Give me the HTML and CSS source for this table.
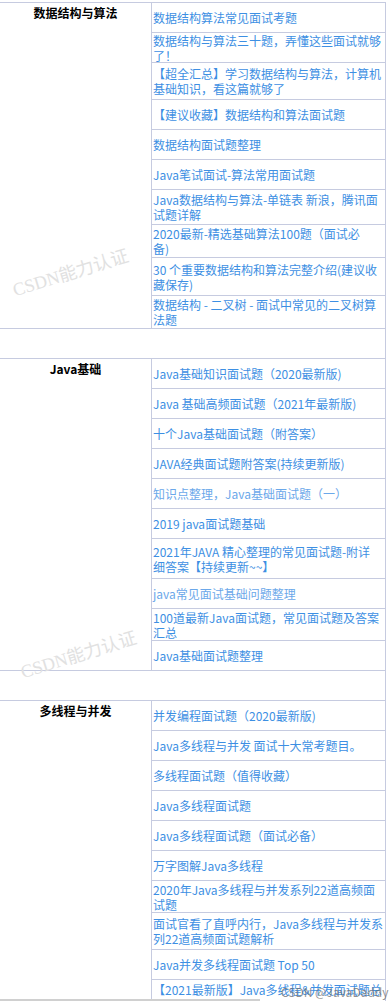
FILE: index.html
```html
<!DOCTYPE html>
<html lang="zh-CN">
<head>
<meta charset="utf-8">
<title>面试题汇总</title>
<link rel="stylesheet" href="styles.css">
</head>
<body>
<div class="sheet">
  <section class="group">
    <div class="label">数据结构与算法</div>
    <ul class="items">
      <li class="item"><a href="#">数据结构算法常见面试考题</a></li>
      <li class="item"><a href="#">数据结构与算法三十题，弄懂这些面试就够了！</a></li>
      <li class="item h36"><a href="#">【超全汇总】学习数据结构与算法，计算机基础知识，看这篇就够了</a></li>
      <li class="item"><a href="#">【建议收藏】数据结构和算法面试题</a></li>
      <li class="item"><a href="#">数据结构面试题整理</a></li>
      <li class="item"><a href="#">Java笔试面试-算法常用面试题</a></li>
      <li class="item h34"><a href="#">Java数据结构与算法-单链表 新浪，腾讯面试题详解</a></li>
      <li class="item h32"><a href="#">2020最新-精选基础算法100题（面试必<br>备)</a></li>
      <li class="item h37"><a href="#">30 个重要数据结构和算法完整介绍(建议收藏保存)</a></li>
      <li class="item h32"><a href="#">数据结构 - 二叉树 - 面试中常见的二叉树算法题</a></li>
    </ul>
  </section>
  <div class="gap"></div>
  <section class="group">
    <div class="label">Java基础</div>
    <ul class="items">
      <li class="item"><a href="#">Java基础知识面试题（2020最新版)</a></li>
      <li class="item"><a href="#">Java 基础高频面试题（2021年最新版)</a></li>
      <li class="item"><a href="#">十个Java基础面试题（附答案）</a></li>
      <li class="item"><a href="#">JAVA经典面试题附答案(持续更新版)</a></li>
      <li class="item"><a class="seen" href="#">知识点整理，Java基础面试题（一）</a></li>
      <li class="item"><a href="#">2019 java面试题基础</a></li>
      <li class="item h39"><a href="#">2021年JAVA 精心整理的常见面试题-附详<br>细答案【持续更新~~】</a></li>
      <li class="item"><a class="seen" href="#">java常见面试基础问题整理</a></li>
      <li class="item h31"><a href="#">100道最新Java面试题，常见面试题及答案汇总</a></li>
      <li class="item"><a href="#">Java基础面试题整理</a></li>
    </ul>
  </section>
  <div class="gap"></div>
  <section class="group">
    <div class="label">多线程与并发</div>
    <ul class="items">
      <li class="item"><a href="#">并发编程面试题（2020最新版)</a></li>
      <li class="item"><a href="#">Java多线程与并发 面试十大常考题目。</a></li>
      <li class="item"><a href="#">多线程面试题（值得收藏）</a></li>
      <li class="item"><a href="#">Java多线程面试题</a></li>
      <li class="item"><a href="#">Java多线程面试题（面试必备）</a></li>
      <li class="item"><a href="#">万字图解Java多线程</a></li>
      <li class="item h31"><a href="#">2020年Java多线程与并发系列22道高频面试题</a></li>
      <li class="item h36"><a href="#">面试官看了直呼内行，Java多线程与并发系列22道高频面试题解析</a></li>
      <li class="item"><a href="#">Java并发多线程面试题 Top 50</a></li>
      <li class="item h34"><a href="#">【2021最新版】Java多线程&amp;并发面试题总结</a></li>
    </ul>
  </section>
  <div class="wm wm-1">CSDN能力认证</div>
  <div class="wm wm-2">CSDN能力认证</div>
  <div class="credit">CSDN @JavaDaddy</div>
  <div class="hscroll"></div>
</div>
</body>
</html>
```
FILE: styles.css
```css
html, body {
  margin: 0;
  padding: 0;
  background: #ffffff;
}

body {
  font-family: "Noto Sans CJK SC", "Noto Sans", sans-serif;
  font-size: 12px;
  color: #000;
  overflow: hidden;
}

.sheet {
  position: relative;
  width: 386px;
  padding-top: 2px;
}

.group {
  display: flex;
  border-top: 1px solid #c6cbe0;
  border-right: 1px solid #c6cbe0;
}

.label {
  width: 151px;
  flex: none;
  text-align: center;
  font-weight: bold;
  line-height: 14px;
  padding-top: 3px;
}

.items {
  flex: 1;
  list-style: none;
  margin: 0;
  padding: 0;
  border-left: 1px solid #c6cbe0;
}

.item {
  height: 29px;
  display: flex;
  align-items: center;
  padding-left: 1px;
  padding-right: 2px;
  line-height: 15px;
}

.item + .item {
  border-top: 1px solid #c6cbe0;
}

.item.h31 { height: 31px; }
.item.h32 { height: 32px; }
.item.h34 { height: 34px; }
.item.h36 { height: 36px; }
.item.h37 { height: 37px; }
.item.h39 { height: 39px; }

.item a {
  color: #3d8fe3;
  text-decoration: none;
}

.item a.seen {
  color: #6ba8ea;
}

.gap {
  height: 29px;
  border-top: 1px solid #c6cbe0;
  border-right: 1px solid #c6cbe0;
}

.wm {
  position: absolute;
  white-space: nowrap;
  font-family: "Liberation Serif", "Noto Sans CJK SC", serif;
  font-size: 18px;
  color: #e1e1e1;
  transform: rotate(-17deg);
  pointer-events: none;
}

.wm-1 { left: 10px; top: 258px; }
.wm-2 { left: 18px; top: 640px; }

.credit {
  position: absolute;
  left: 281px;
  top: 983px;
  font-size: 12px;
  color: rgba(110, 110, 110, 0.75);
  white-space: nowrap;
}

.hscroll {
  position: absolute;
  left: 0;
  top: 999px;
  width: 260px;
  height: 2px;
  background: #d0d0d0;
}
```
